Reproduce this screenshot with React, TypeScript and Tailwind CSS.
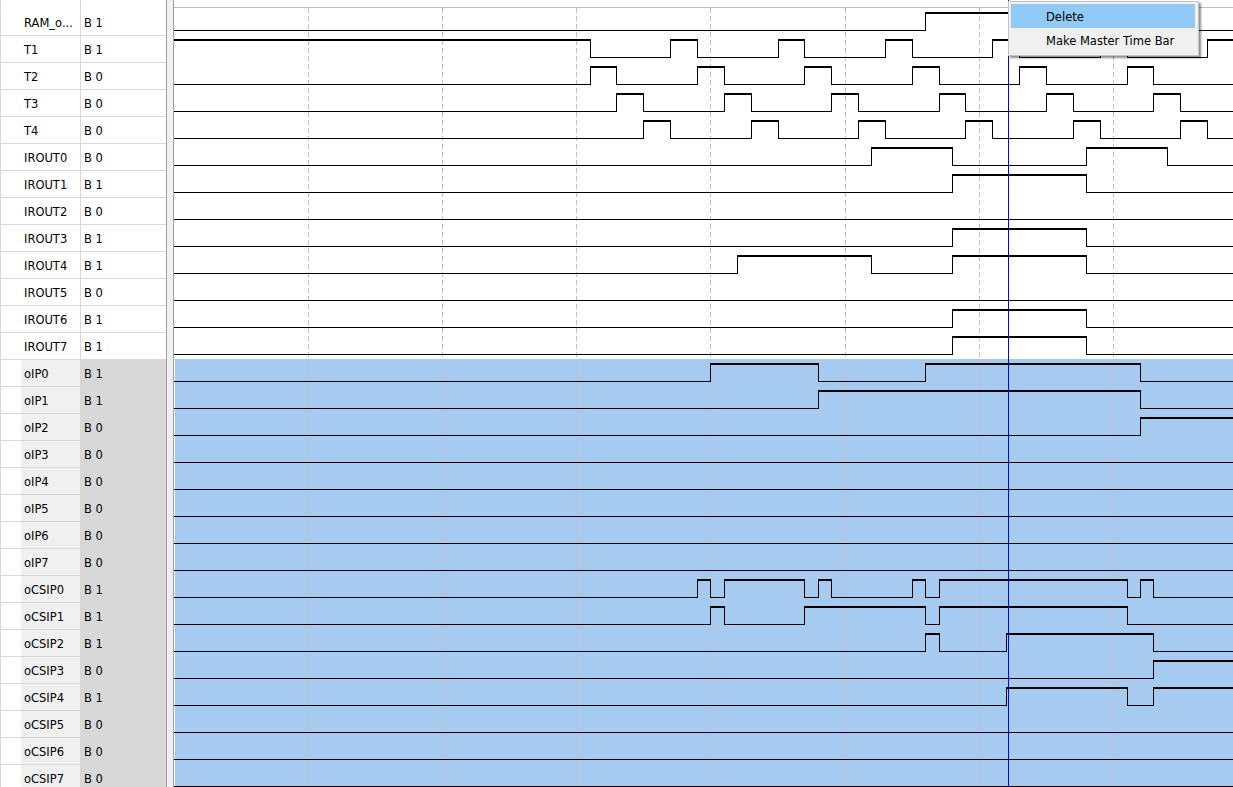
const PANE_X = 175;
const PANE_W = 1058;
const CURSOR_X = 1008;
const GRID_X = [308, 442, 576, 710, 845, 979, 1113];

interface Signal {
  name: string;
  start?: boolean; // level at the left edge, low if omitted
  edges?: number[];
  selected?: boolean;
}

const IR_PULSE = [952, 1086];

const signals: Signal[] = [
  { name: 'RAM_o...', edges: [925, 1009] },
  { name: 'T1', start: true, edges: [590, 670, 697, 778, 804, 885, 912, 992, 1019, 1100, 1127, 1207] },
  { name: 'T2', edges: [590, 616, 697, 724, 804, 831, 912, 939, 1019, 1046, 1127, 1153] },
  { name: 'T3', edges: [616, 643, 724, 751, 831, 858, 939, 965, 1046, 1073, 1153, 1180] },
  { name: 'T4', edges: [643, 670, 751, 778, 858, 885, 965, 992, 1073, 1100, 1180, 1207] },
  { name: 'IROUT0', edges: [871, 952, 1086, 1167] },
  { name: 'IROUT1', edges: IR_PULSE },
  { name: 'IROUT2' },
  { name: 'IROUT3', edges: IR_PULSE },
  { name: 'IROUT4', edges: [737, 871, 952, 1086] },
  { name: 'IROUT5' },
  { name: 'IROUT6', edges: IR_PULSE },
  { name: 'IROUT7', edges: IR_PULSE },
  { name: 'oIP0', selected: true, edges: [710, 818, 925, 1140] },
  { name: 'oIP1', selected: true, edges: [818, 1140] },
  { name: 'oIP2', selected: true, edges: [1140] },
  { name: 'oIP3', selected: true },
  { name: 'oIP4', selected: true },
  { name: 'oIP5', selected: true },
  { name: 'oIP6', selected: true },
  { name: 'oIP7', selected: true },
  { name: 'oCSIP0', selected: true, edges: [697, 710, 724, 804, 818, 831, 912, 925, 939, 1127, 1140, 1153] },
  { name: 'oCSIP1', selected: true, edges: [710, 724, 804, 925, 939, 1127] },
  { name: 'oCSIP2', selected: true, edges: [925, 939, 1006, 1153] },
  { name: 'oCSIP3', selected: true, edges: [1153] },
  { name: 'oCSIP4', selected: true, edges: [1006, 1127, 1153] },
  { name: 'oCSIP5', selected: true },
  { name: 'oCSIP6', selected: true },
  { name: 'oCSIP7', selected: true },
];

// value column shows the level under the cursor
function valueAtCursor(s: Signal) {
  const passed = (s.edges ?? []).filter((x) => x <= CURSOR_X).length;
  const high = passed % 2 === 0 ? !!s.start : !s.start;
  return high ? 'B 1' : 'B 0';
}

function Wave({ signal }: { signal: Signal }) {
  const edges = signal.edges ?? [];
  const points = [PANE_X - 1, ...edges, PANE_X + PANE_W];
  let level = !!signal.start;
  let thin = '';
  let thick = '';
  for (let i = 0; i < points.length - 1; i++) {
    const a = points[i] - PANE_X;
    const b = points[i + 1] - PANE_X;
    if (level) thick += `M${a} 5H${b + 1}`;
    else thin += `M${a} 22.5H${b + 1}`;
    if (i < points.length - 2) thin += `M${b + 0.5} 4V23`;
    level = !level;
  }
  return (
    <svg width={PANE_W} height={27} className="relative z-20 block overflow-visible" shapeRendering="crispEdges">
      <path d={thin} fill="none" stroke="#000" strokeWidth={1} />
      <path d={thick} fill="none" stroke="#000" strokeWidth={2} />
    </svg>
  );
}

function LabelRow({ signal, first }: { signal: Signal; first: boolean }) {
  return (
    <div className="flex h-[27px]">
      <div className={`flex w-[81px] border-x border-t border-x-[#d8d8d8] ${first ? 'border-t-transparent' : 'border-t-[#d8d8d8]'}`}>
        <div className={`ml-5 flex flex-1 items-center pl-[3px] pt-[3px] ${signal.selected ? 'bg-[#f0f0f0]' : ''}`}>{signal.name}</div>
      </div>
      <div className={`flex w-[85px] items-center border-t pl-[3px] pt-[3px] ${first ? 'border-t-transparent' : 'border-t-[#d8d8d8]'} ${signal.selected ? 'bg-[#d8d8d8]' : ''}`}>{valueAtCursor(signal)}</div>
    </div>
  );
}

function ContextMenu() {
  return (
    <div className="absolute left-[834px] top-px z-40 h-[55px] w-[191px] border border-[#c4c4c4] bg-[#f0f0f0] px-[2px] pt-[2px] shadow-[2px_2px_2px_rgba(0,0,0,0.45)]">
      <div className="flex h-6 w-[184px] items-center bg-[#91c9f7] pl-[35px] pt-[3px]">Delete</div>
      <div className="flex h-6 items-center pl-[35px] pt-[3px]">Make Master Time Bar</div>
    </div>
  );
}

export default function App() {
  return (
    <div className="flex h-[787px] w-[1233px] overflow-hidden bg-white font-['DejaVu_Sans',sans-serif] text-[11.5px] text-black">
      {/* signal names and values */}
      <div className="w-[166px] shrink-0">
        <div className="h-2 w-[81px] border-x border-[#d8d8d8]" />
        {signals.map((s, i) => (
          <LabelRow key={s.name} signal={s} first={i === 0} />
        ))}
      </div>

      {/* splitter */}
      <div className="w-2 shrink-0 border-x border-[#a0a0a0] bg-[#f0f0f0]" />

      {/* wave pane */}
      <div className="relative flex-1">
        <div className="h-2 border-b border-[#c0c0c0]" />
        {signals.map((s) => (
          <div key={s.name} className={`ml-px h-[27px] ${s.selected ? 'bg-[#a6caf0]' : ''}`}>
            <Wave signal={s} />
          </div>
        ))}

        <svg width={1059} height={779} className="absolute left-0 top-2 z-10" shapeRendering="crispEdges">
          {GRID_X.map((x) => (
            <line key={x} x1={x - 174 + 0.5} x2={x - 174 + 0.5} y1={0} y2={779} stroke="#c0c0c0" strokeDasharray="5 3" />
          ))}
        </svg>

        <div className="absolute bottom-0 left-[834px] top-0 z-30 w-px bg-[#0000ff]" />
        <ContextMenu />
      </div>
    </div>
  );
}
